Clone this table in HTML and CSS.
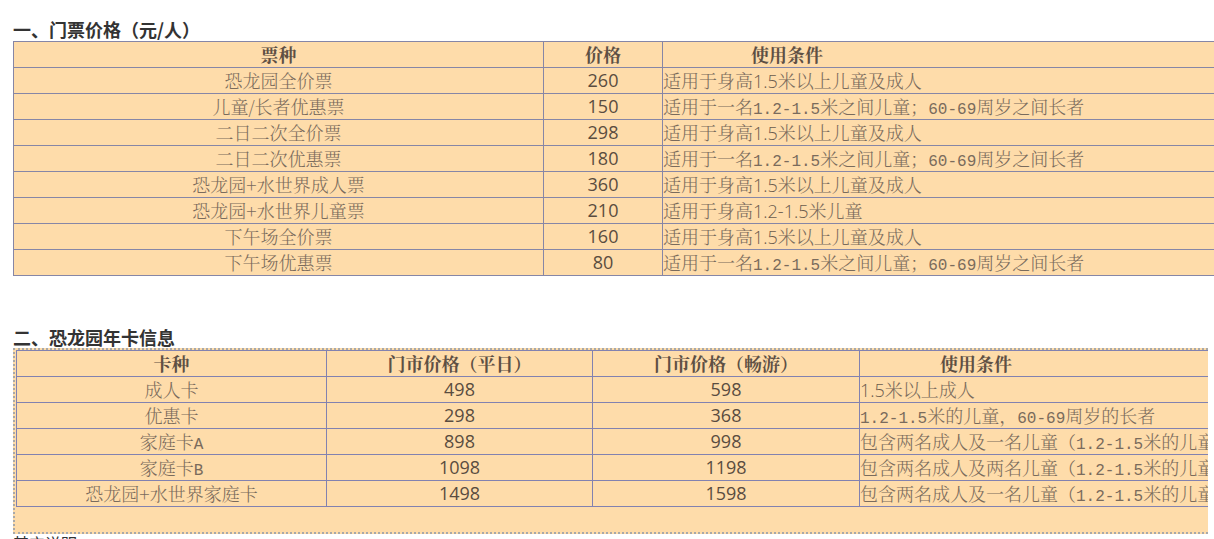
FILE: index.html
```html
<!DOCTYPE html>
<html lang="zh-CN">
<head>
<meta charset="utf-8">
<title>门票价格</title>
<link rel="stylesheet" href="styles.css">
</head>
<body>
<div class="page">
  <h2 class="sec">一、门票价格（元/人）</h2>
  <table class="tbl tbl-ticket">
    <colgroup><col class="c1"><col class="c2"><col class="c3"></colgroup>
    <tr class="head"><th>票种</th><th>价格</th><th class="cond-h">使用条件</th></tr>
    <tr><td class="name">恐龙园全价票</td><td class="num">260</td><td class="cond">适用于身高<span class="sans">1.5</span>米以上儿童及成人</td></tr>
    <tr><td class="name">儿童/长者优惠票</td><td class="num">150</td><td class="cond">适用于一名<span class="mono">1.2-1.5</span>米之间儿童；<span class="mono">60-69</span>周岁之间长者</td></tr>
    <tr><td class="name">二日二次全价票</td><td class="num">298</td><td class="cond">适用于身高<span class="sans">1.5</span>米以上儿童及成人</td></tr>
    <tr><td class="name">二日二次优惠票</td><td class="num">180</td><td class="cond">适用于一名<span class="mono">1.2-1.5</span>米之间儿童；<span class="mono">60-69</span>周岁之间长者</td></tr>
    <tr><td class="name">恐龙园+水世界成人票</td><td class="num">360</td><td class="cond">适用于身高<span class="sans">1.5</span>米以上儿童及成人</td></tr>
    <tr><td class="name">恐龙园+水世界儿童票</td><td class="num">210</td><td class="cond">适用于身高<span class="sans">1.2-1.5</span>米儿童</td></tr>
    <tr><td class="name">下午场全价票</td><td class="num">160</td><td class="cond">适用于身高<span class="sans">1.5</span>米以上儿童及成人</td></tr>
    <tr><td class="name">下午场优惠票</td><td class="num">80</td><td class="cond">适用于一名<span class="mono">1.2-1.5</span>米之间儿童；<span class="mono">60-69</span>周岁之间长者</td></tr>
  </table>

  <h2 class="sec sec2">二、恐龙园年卡信息</h2>
  <div class="card-box">
    <table class="tbl tbl-card">
      <colgroup><col class="k1"><col class="k2"><col class="k3"><col class="k4"></colgroup>
      <tr class="head"><th>卡种</th><th>门市价格（平日）</th><th>门市价格（畅游）</th><th class="cond-h2">使用条件</th></tr>
      <tr><td class="name">成人卡</td><td class="num">498</td><td class="num">598</td><td class="cond"><span class="sans">1.5</span>米以上成人</td></tr>
      <tr><td class="name">优惠卡</td><td class="num">298</td><td class="num">368</td><td class="cond"><span class="mono">1.2-1.5</span>米的儿童，<span class="mono">60-69</span>周岁的长者</td></tr>
      <tr><td class="name">家庭卡<span class="mono">A</span></td><td class="num">898</td><td class="num">998</td><td class="cond">包含两名成人及一名儿童（<span class="mono">1.2-1.5</span>米的儿童）</td></tr>
      <tr><td class="name">家庭卡<span class="mono">B</span></td><td class="num">1098</td><td class="num">1198</td><td class="cond">包含两名成人及两名儿童（<span class="mono">1.2-1.5</span>米的儿童）</td></tr>
      <tr><td class="name">恐龙园+水世界家庭卡</td><td class="num">1498</td><td class="num">1598</td><td class="cond">包含两名成人及一名儿童（<span class="mono">1.2-1.5</span>米的儿童）</td></tr>
    </table>
  </div>
  <p class="note">其它说明</p>
</div>
</body>
</html>
```

FILE: styles.css
```css
html, body {
  margin: 0;
  padding: 0;
  background: #ffffff;
  overflow: hidden;
}

.page {
  padding: 18px 0 0 13px;
}

.sec {
  margin: 0;
  font-family: "Noto Sans CJK SC", "Noto Sans", sans-serif;
  font-size: 18px;
  font-weight: 700;
  line-height: 23px;
  color: #333333;
}

.sec2 {
  margin-top: 50px;
  line-height: 22px;
}

.tbl {
  border-collapse: collapse;
  table-layout: fixed;
  background: #fedcaa;
  font-family: "Noto Serif CJK SC", "Noto Sans CJK SC", serif;
  font-size: 18px;
  color: #7a6b5c;
}

.tbl th,
.tbl td {
  border: 1px solid #8686a6;
  padding: 0;
  height: 25px;
  line-height: 25px;
  white-space: nowrap;
  overflow: hidden;
  font-weight: 400;
  vertical-align: middle;
}

.tbl .head th {
  font-weight: 700;
  color: #5e5044;
  text-align: center;
}

.tbl-ticket {
  width: 1300px;
}

.tbl-ticket .c1 { width: 530px; }
.tbl-ticket .c2 { width: 119px; }
.tbl-ticket .c3 { width: 651px; }

.tbl .name {
  text-align: center;
  font-weight: 300;
}

.tbl .num {
  text-align: center;
  font-family: "Open Sans", "Noto Sans", sans-serif;
  font-size: 18px;
  color: #5a4c40;
}

.tbl .cond {
  text-align: left;
  font-weight: 300;
}

.tbl .head .cond-h {
  text-align: left;
  padding-left: 88px;
}

.tbl .head .cond-h2 {
  text-align: left;
  padding-left: 80px;
}

.sans {
  font-family: "Open Sans", "Noto Sans", sans-serif;
  font-size: 18px;
  line-height: 1;
  color: #6a5b4d;
}

.mono {
  font-family: "Liberation Mono", "DejaVu Sans Mono", monospace;
  font-size: 16px;
  line-height: 1;
}

.card-box {
  width: 1192px;
  border: 2px dotted #a9a9a9;
  border-right: none;
  background: #fedcaa;
  padding: 0 0 25px 1px;
  overflow: hidden;
}

.tbl-card {
  width: 1320px;
}

.tbl-card .k1 { width: 310px; }
.tbl-card .k2 { width: 266px; }
.tbl-card .k3 { width: 267px; }
.tbl-card .k4 { width: 477px; }

.tbl-card th,
.tbl-card td {
  border-color: #8282b0;
}

.note {
  margin: 0;
  font-family: "Noto Sans CJK SC", sans-serif;
  font-size: 16px;
  line-height: 18px;
  color: #333333;
}
```
